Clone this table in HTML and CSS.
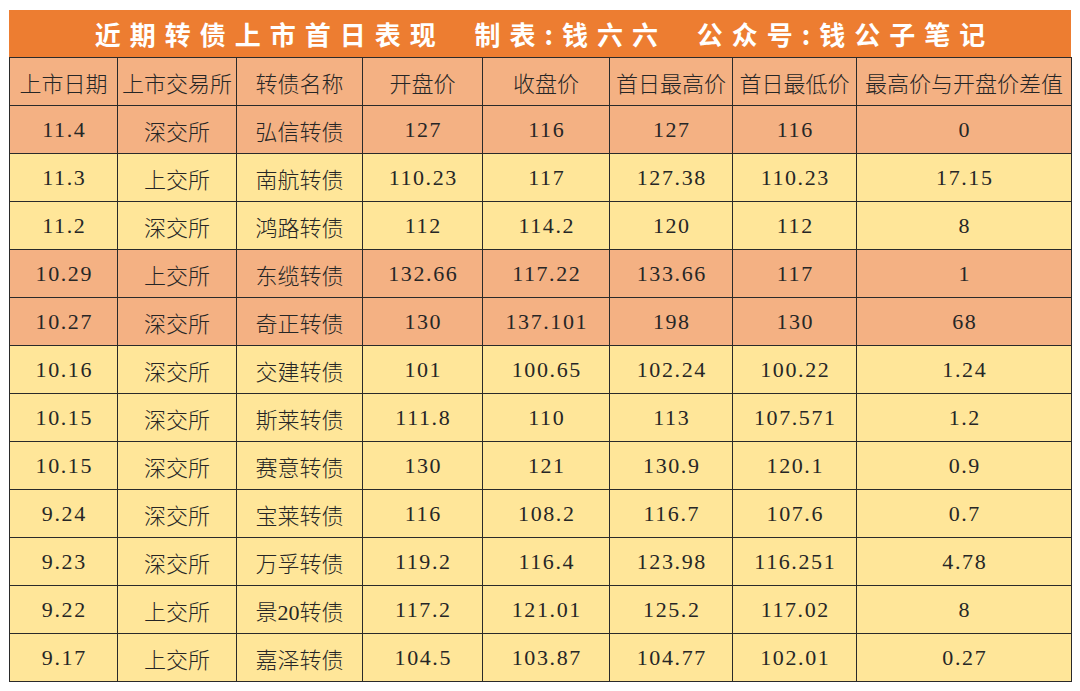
FILE: index.html
```html
<!DOCTYPE html>
<html lang="zh-CN">
<head>
<meta charset="utf-8">
<title>近期转债上市首日表现</title>
<link rel="stylesheet" href="styles.css">
</head>
<body>
<div class="sheet">
  <div class="title">近期转债上市首日表现  制表:钱六六  公众号:钱公子笔记</div>
  <table class="grid">
    <colgroup>
      <col class="c1"><col class="c2"><col class="c3"><col class="c4"><col class="c5"><col class="c6"><col class="c7"><col class="c8">
    </colgroup>
    <thead>
      <tr class="hl"><th>上市日期</th><th>上市交易所</th><th>转债名称</th><th>开盘价</th><th>收盘价</th><th>首日最高价</th><th>首日最低价</th><th>最高价与开盘价差值</th></tr>
    </thead>
    <tbody>
      <tr class="hl"><td>11.4</td><td>深交所</td><td>弘信转债</td><td>127</td><td>116</td><td>127</td><td>116</td><td>0</td></tr>
      <tr><td>11.3</td><td>上交所</td><td>南航转债</td><td>110.23</td><td>117</td><td>127.38</td><td>110.23</td><td>17.15</td></tr>
      <tr><td>11.2</td><td>深交所</td><td>鸿路转债</td><td>112</td><td>114.2</td><td>120</td><td>112</td><td>8</td></tr>
      <tr class="hl"><td>10.29</td><td>上交所</td><td>东缆转债</td><td>132.66</td><td>117.22</td><td>133.66</td><td>117</td><td>1</td></tr>
      <tr class="hl"><td>10.27</td><td>深交所</td><td>奇正转债</td><td>130</td><td>137.101</td><td>198</td><td>130</td><td>68</td></tr>
      <tr><td>10.16</td><td>深交所</td><td>交建转债</td><td>101</td><td>100.65</td><td>102.24</td><td>100.22</td><td>1.24</td></tr>
      <tr><td>10.15</td><td>深交所</td><td>斯莱转债</td><td>111.8</td><td>110</td><td>113</td><td>107.571</td><td>1.2</td></tr>
      <tr><td>10.15</td><td>深交所</td><td>赛意转债</td><td>130</td><td>121</td><td>130.9</td><td>120.1</td><td>0.9</td></tr>
      <tr><td>9.24</td><td>深交所</td><td>宝莱转债</td><td>116</td><td>108.2</td><td>116.7</td><td>107.6</td><td>0.7</td></tr>
      <tr><td>9.23</td><td>深交所</td><td>万孚转债</td><td>119.2</td><td>116.4</td><td>123.98</td><td>116.251</td><td>4.78</td></tr>
      <tr><td>9.22</td><td>上交所</td><td>景20转债</td><td>117.2</td><td>121.01</td><td>125.2</td><td>117.02</td><td>8</td></tr>
      <tr><td>9.17</td><td>上交所</td><td>嘉泽转债</td><td>104.5</td><td>103.87</td><td>104.77</td><td>102.01</td><td>0.27</td></tr>
    </tbody>
  </table>
</div>
</body>
</html>
```
FILE: styles.css
```css
html, body {
  margin: 0;
  padding: 0;
  background: #ffffff;
}

.sheet {
  width: 1062px;
  margin: 10px 0 0 9px;
}

.title {
  height: 47px;
  line-height: 47px;
  background: #ED7D31;
  color: #ffffff;
  font-family: "Noto Sans CJK SC", sans-serif;
  font-weight: 700;
  font-size: 26px;
  letter-spacing: 9px;
  text-align: center;
  white-space: pre;
  padding-left: 9px;
  box-sizing: border-box;
}

.grid {
  width: 1062px;
  border-collapse: collapse;
  table-layout: fixed;
  font-family: "Liberation Serif", "Noto Sans CJK SC", serif;
  font-size: 22px;
  color: #262626;
}

.c1 { width: 108px; }
.c2 { width: 119px; }
.c3 { width: 126px; }
.c4 { width: 120px; }
.c5 { width: 127px; }
.c6 { width: 123px; }
.c7 { width: 124px; }
.c8 { width: 215px; }

.grid tr {
  height: 48px;
  background: #FFE699;
}

.grid tr.hl {
  background: #F4B183;
}

.grid th,
.grid td {
  border: 1px solid #2a2a2a;
  padding: 0;
  text-align: center;
  vertical-align: middle;
  font-weight: 300;
  white-space: nowrap;
  overflow: hidden;
}

.grid tbody td:not(:nth-child(2)):not(:nth-child(3)) {
  letter-spacing: 1.6px;
  text-indent: 1.6px;
}
```
